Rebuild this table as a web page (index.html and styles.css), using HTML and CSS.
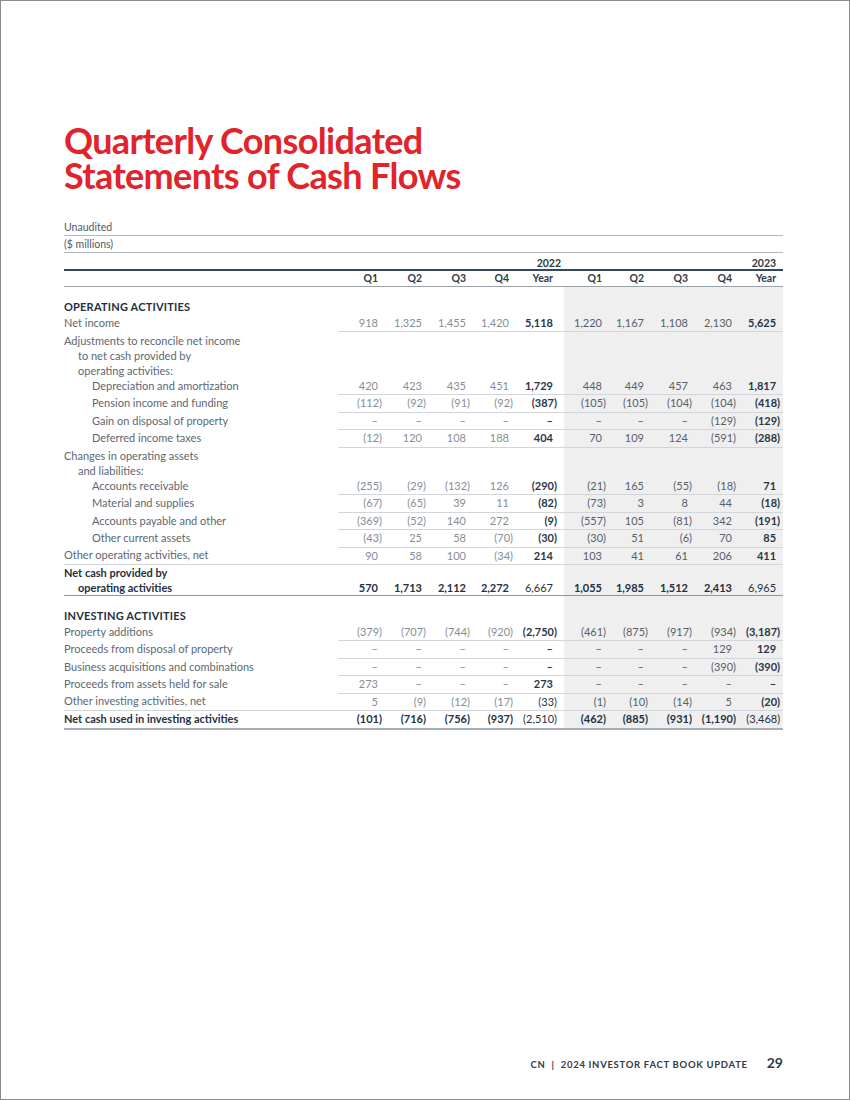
FILE: index.html
```html
<!DOCTYPE html>
<html lang="en">

<head>
  <meta charset="UTF-8">
  <meta name="viewport" content="width=device-width, initial-scale=1.0">
  <title>Quarterly Consolidated Statements of Cash Flows</title>

  <link rel="stylesheet" href="styles.css">
</head>

<body>
  <div class="page">
    <h1 class="title">Quarterly Consolidated<br>Statements of Cash Flows</h1>

    <table class="cash">
      <colgroup>
        <col class="c-label">
        <col class="c-44"><col class="c-44"><col class="c-44"><col class="c-43"><col class="c-51">
        <col class="c-42"><col class="c-42"><col class="c-44"><col class="c-44"><col class="c-47">
      </colgroup>
      <thead>
        <tr class="note"><th colspan="11">Unaudited</th></tr>
        <tr class="note"><th colspan="11">($ millions)</th></tr>
        <tr class="years">
          <th></th>
          <th colspan="5">2022</th>
          <th colspan="5">2023</th>
        </tr>
        <tr class="quarters">
          <th></th>
          <th>Q1</th><th>Q2</th><th>Q3</th><th>Q4</th><th>Year</th>
          <th>Q1</th><th>Q2</th><th>Q3</th><th>Q4</th><th>Year</th>
        </tr>
      </thead>
      <tbody>
        <!-- operating activities -->
        <tr class="section">
          <td>OPERATING ACTIVITIES</td>
          <td></td><td></td><td></td><td></td><td></td><td></td><td></td><td></td><td></td><td></td>
        </tr>
        <tr class="ln">
          <td>Net income</td>
          <td>918</td><td>1,325</td><td>1,455</td><td>1,420</td><td>5,118</td>
          <td>1,220</td><td>1,167</td><td>1,108</td><td>2,130</td><td>5,625</td>
        </tr>
        <tr class="multi">
          <td>Adjustments to reconcile net income<br><span class="i1">to net cash provided by</span><br><span class="i1">operating activities:</span></td>
          <td></td><td></td><td></td><td></td><td></td><td></td><td></td><td></td><td></td><td></td>
        </tr>
        <tr class="ln">
          <td class="i2">Depreciation and amortization</td>
          <td>420</td><td>423</td><td>435</td><td>451</td><td>1,729</td>
          <td>448</td><td>449</td><td>457</td><td>463</td><td>1,817</td>
        </tr>
        <tr class="ln">
          <td class="i2">Pension income and funding</td>
          <td class="n">(112)</td><td class="n">(92)</td><td class="n">(91)</td><td class="n">(92)</td><td class="n">(387)</td>
          <td class="n">(105)</td><td class="n">(105)</td><td class="n">(104)</td><td class="n">(104)</td><td class="n">(418)</td>
        </tr>
        <tr class="ln">
          <td class="i2">Gain on disposal of property</td>
          <td>–</td><td>–</td><td>–</td><td>–</td><td>–</td>
          <td>–</td><td>–</td><td>–</td><td class="n">(129)</td><td class="n">(129)</td>
        </tr>
        <tr class="ln">
          <td class="i2">Deferred income taxes</td>
          <td class="n">(12)</td><td>120</td><td>108</td><td>188</td><td>404</td>
          <td>70</td><td>109</td><td>124</td><td class="n">(591)</td><td class="n">(288)</td>
        </tr>
        <tr class="multi">
          <td>Changes in operating assets<br><span class="i1">and liabilities:</span></td>
          <td></td><td></td><td></td><td></td><td></td><td></td><td></td><td></td><td></td><td></td>
        </tr>
        <tr class="ln">
          <td class="i2">Accounts receivable</td>
          <td class="n">(255)</td><td class="n">(29)</td><td class="n">(132)</td><td>126</td><td class="n">(290)</td>
          <td class="n">(21)</td><td>165</td><td class="n">(55)</td><td class="n">(18)</td><td>71</td>
        </tr>
        <tr class="ln">
          <td class="i2">Material and supplies</td>
          <td class="n">(67)</td><td class="n">(65)</td><td>39</td><td>11</td><td class="n">(82)</td>
          <td class="n">(73)</td><td>3</td><td>8</td><td>44</td><td class="n">(18)</td>
        </tr>
        <tr class="ln">
          <td class="i2">Accounts payable and other</td>
          <td class="n">(369)</td><td class="n">(52)</td><td>140</td><td>272</td><td class="n">(9)</td>
          <td class="n">(557)</td><td>105</td><td class="n">(81)</td><td>342</td><td class="n">(191)</td>
        </tr>
        <tr class="ln">
          <td class="i2">Other current assets</td>
          <td class="n">(43)</td><td>25</td><td>58</td><td class="n">(70)</td><td class="n">(30)</td>
          <td class="n">(30)</td><td>51</td><td class="n">(6)</td><td>70</td><td>85</td>
        </tr>
        <tr class="full">
          <td>Other operating activities, net</td>
          <td>90</td><td>58</td><td>100</td><td class="n">(34)</td><td>214</td>
          <td>103</td><td>41</td><td>61</td><td>206</td><td>411</td>
        </tr>
        <tr class="total full dark">
          <td>Net cash provided by<br><span class="i1">operating activities</span></td>
          <td>570</td><td>1,713</td><td>2,112</td><td>2,272</td><td>6,667</td>
          <td>1,055</td><td>1,985</td><td>1,512</td><td>2,413</td><td>6,965</td>
        </tr>

        <!-- investing activities -->
        <tr class="section second">
          <td>INVESTING ACTIVITIES</td>
          <td></td><td></td><td></td><td></td><td></td><td></td><td></td><td></td><td></td><td></td>
        </tr>
        <tr class="ln">
          <td>Property additions</td>
          <td class="n">(379)</td><td class="n">(707)</td><td class="n">(744)</td><td class="n">(920)</td><td class="n">(2,750)</td>
          <td class="n">(461)</td><td class="n">(875)</td><td class="n">(917)</td><td class="n">(934)</td><td class="n">(3,187)</td>
        </tr>
        <tr class="ln">
          <td>Proceeds from disposal of property</td>
          <td>–</td><td>–</td><td>–</td><td>–</td><td>–</td>
          <td>–</td><td>–</td><td>–</td><td>129</td><td>129</td>
        </tr>
        <tr class="ln">
          <td>Business acquisitions and combinations</td>
          <td>–</td><td>–</td><td>–</td><td>–</td><td>–</td>
          <td>–</td><td>–</td><td>–</td><td class="n">(390)</td><td class="n">(390)</td>
        </tr>
        <tr class="ln">
          <td>Proceeds from assets held for sale</td>
          <td>273</td><td>–</td><td>–</td><td>–</td><td>273</td>
          <td>–</td><td>–</td><td>–</td><td>–</td><td>–</td>
        </tr>
        <tr class="full">
          <td>Other investing activities, net</td>
          <td>5</td><td class="n">(9)</td><td class="n">(12)</td><td class="n">(17)</td><td class="n lite">(33)</td>
          <td class="n">(1)</td><td class="n">(10)</td><td class="n">(14)</td><td>5</td><td class="n">(20)</td>
        </tr>
        <tr class="total full last">
          <td>Net cash used in investing activities</td>
          <td class="n">(101)</td><td class="n">(716)</td><td class="n">(756)</td><td class="n">(937)</td><td class="n">(2,510)</td>
          <td class="n">(462)</td><td class="n">(885)</td><td class="n">(931)</td><td class="n">(1,190)</td><td class="n">(3,468)</td>
        </tr>
      </tbody>
    </table>

    <footer class="footer">
      <p class="book">CN&nbsp;&nbsp;|&nbsp;&nbsp;2024 INVESTOR FACT BOOK UPDATE</p>
      <p class="folio">29</p>
    </footer>
  </div>
</body>

</html>
```

FILE: styles.css
```css
/* document */
* {
  box-sizing: border-box;
}

body {
  margin: 0;
  font-family: Lato, "Noto Sans", sans-serif;
  background: #fff;
}

/* page */
.page {
  width: 850px;
  height: 1100px;
  border: 1px solid #8c8c8c;
  padding: 0 66px 0 63px;
  display: flex;
  flex-direction: column;
}

.title {
  margin: 122px 0 0 0;
  font-size: 36px;
  line-height: 35px;
  letter-spacing: -0.65px;
  font-weight: 700;
  color: #e1232b;
}

/* table */
.cash {
  margin-top: 26px;
  width: 719px;
  border-collapse: collapse;
  table-layout: fixed;
  font-size: 11px;
}

.c-label { width: 274px; }
.c-42 { width: 42px; }
.c-43 { width: 43px; }
.c-44 { width: 44px; }
.c-47 { width: 47px; }
.c-51 { width: 51px; }

.cash th,
.cash td {
  padding: 0;
  --pad: 0px;
  white-space: nowrap;
}

.cash th:nth-child(6),
.cash td:nth-child(6) { --pad: 7px; }

.cash th:nth-child(11),
.cash td:nth-child(11) { --pad: 3px; }

/* head */
.note th {
  text-align: left;
  font-weight: 400;
  font-size: 10.5px;
  color: #4d5863;
  line-height: 16px;
  border-bottom: 1px solid #b4bac0;
}

.years th {
  font-weight: 700;
  font-size: 10.5px;
  color: #2f3b48;
  text-align: right;
  padding: 4px 3px 0 0;
  line-height: 12px;
  border-bottom: 2px solid #34495e;
}

.years th:last-child { padding-right: 7px; }

.quarters th {
  font-weight: 700;
  font-size: 10.5px;
  color: #2f3b48;
  text-align: right;
  padding-right: calc(var(--pad) + 4px);
  line-height: 15px;
  border-bottom: 1px solid #9aa2aa;
}

.quarters th:nth-child(6) { padding-right: 11px; }

/* body */
.cash td {
  text-align: right;
  line-height: 16.4px;
  padding-right: calc(var(--pad) + 4px);
  color: #858e97;
}

.cash td.n { padding-right: var(--pad); }

.cash td:first-child {
  text-align: left;
  color: #5c6771;
}

.cash td:nth-child(n+7) {
  background: #efefef;
  color: #56616b;
}

.cash td:nth-child(6),
.cash td:nth-child(11) {
  font-weight: 700;
  color: #2b3745;
}

.cash td.lite { font-weight: 400; }

.i1 { padding-left: 14px; }
.i2 { padding-left: 28px !important; }

.ln td:not(:first-child),
.full td {
  border-bottom: 1px solid #d2d6da;
}

.section td {
  padding-top: 12px;
  line-height: 16px;
}

.section td:first-child {
  font-weight: 700;
  color: #24313f;
  letter-spacing: 0.2px;
}

.multi td {
  line-height: 15px;
  padding-top: 1px;
}

.total td {
  font-weight: 700;
  color: #24313f !important;
}

.total td:nth-child(6),
.total td:nth-child(11) { font-weight: 400; }

.total.dark td {
  line-height: 15px;
  vertical-align: bottom;
  padding-bottom: 0;
  border-bottom: 1px solid #8e969e;
}

.total.last td {
  border-bottom: 2px solid #a7aeb5;
}

/* footer */
.footer {
  margin-top: auto;
  margin-bottom: 28px;
  display: flex;
  justify-content: flex-end;
  align-items: baseline;
  gap: 19px;
}

.footer p { margin: 0; }

.book {
  font-size: 9.5px;
  font-weight: 700;
  letter-spacing: 0.7px;
  color: #2f3b48;
}

.folio {
  font-size: 14px;
  font-weight: 700;
  color: #2f3b48;
}
```
